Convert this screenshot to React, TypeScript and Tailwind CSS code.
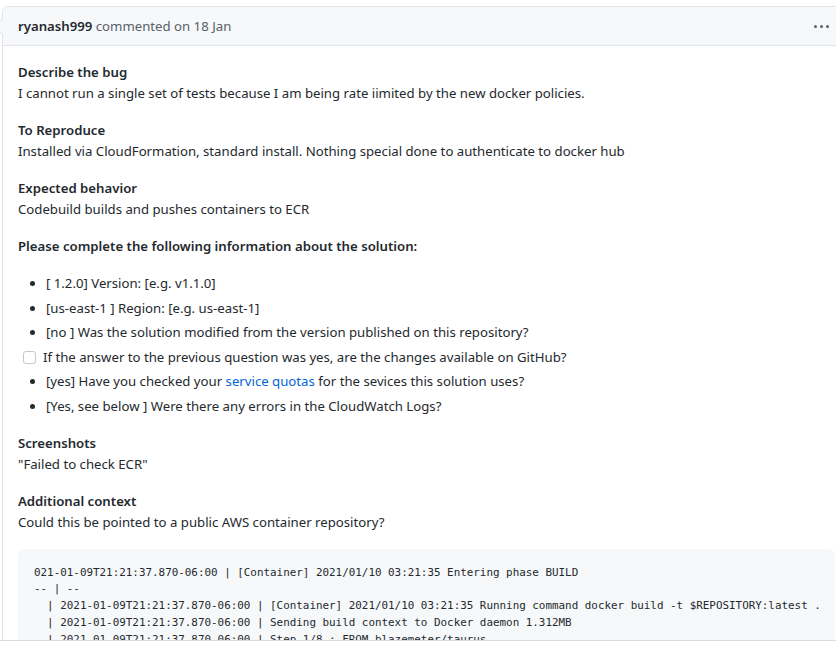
import React from "react";

const codeLines = [
  "021-01-09T21:21:37.870-06:00 | [Container] 2021/01/10 03:21:35 Entering phase BUILD",
  "-- | --",
  "  | 2021-01-09T21:21:37.870-06:00 | [Container] 2021/01/10 03:21:35 Running command docker build -t $REPOSITORY:latest .",
  "  | 2021-01-09T21:21:37.870-06:00 | Sending build context to Docker daemon 1.312MB",
  "  | 2021-01-09T21:21:37.870-06:00 | Step 1/8 : FROM blazemeter/taurus",
];

function Section({ title, children }: { title: string; children: React.ReactNode }) {
  return (
    <p className="mb-4">
      <span className="font-semibold">{title}</span>
      <br />
      {children}
    </p>
  );
}

export default function App() {
  return (
    <div
      className="relative h-[645px] w-[836px] overflow-hidden bg-white text-[13.2px] leading-[21px] text-[#24292e]"
      style={{ fontFamily: '"Noto Sans", "Open Sans", Arial, sans-serif' }}
    >
      <div className="pl-[2px] pt-[6px]">
        <div className="relative w-[860px] rounded-tl-md border border-[#e1e4e8]">
          <svg
            className="absolute left-[-9px] top-[11px]"
            width="10"
            height="18"
            viewBox="0 0 10 18"
          >
            <polygon points="10,0 2,8 2,9 10,17" fill="#f6f8fa" />
            <polyline points="8.5,0.5 1,8.5 8.5,16.5" fill="none" stroke="#d7dbe0" strokeWidth="1" />
          </svg>
          <div className="flex h-[39px] items-center justify-between rounded-tl-md border-b border-[#e1e4e8] bg-[#f6f8fa] pl-[15px] pr-[32px]">
            <div>
              <span className="font-semibold text-[#24292e]">ryanash999</span>
              <span className="text-[#586069]"> commented on 18 Jan</span>
            </div>
            <div className="flex items-center gap-[3px]">
              <span className="h-[3px] w-[3px] rounded-full bg-[#586069]" />
              <span className="h-[3px] w-[3px] rounded-full bg-[#586069]" />
              <span className="h-[3px] w-[3px] rounded-full bg-[#586069]" />
            </div>
          </div>
          <div className="pl-[15px] pr-[26px] pt-[16px]">
            <Section title="Describe the bug">
              I cannot run a single set of tests because I am being rate iimited by the new docker policies.
            </Section>
            <Section title="To Reproduce">
              Installed via CloudFormation, standard install. Nothing special done to authenticate to docker hub
            </Section>
            <Section title="Expected behavior">Codebuild builds and pushes containers to ECR</Section>
            <p className="mb-4 font-semibold">Please complete the following information about the solution:</p>
            <ul className="mb-4 list-disc pl-[28px]">
              <li>[ 1.2.0] Version: [e.g. v1.1.0]</li>
              <li className="mt-[3.5px]">[us-east-1 ] Region: [e.g. us-east-1]</li>
              <li className="mt-[3.5px]">[no ] Was the solution modified from the version published on this repository?</li>
              <li className="mt-[3.5px] ml-[-23px] flex list-none items-center">
                <span className="mr-[7px] inline-block h-[13px] w-[13px] rounded-[3px] border border-[#c8c8c8] bg-white" />
                If the answer to the previous question was yes, are the changes available on GitHub?
              </li>
              <li className="mt-[3.5px]">
                [yes] Have you checked your <span className="text-[#0366d6]">service quotas</span> for the sevices this solution uses?
              </li>
              <li className="mt-[3.5px]">[Yes, see below ] Were there any errors in the CloudWatch Logs?</li>
            </ul>
            <Section title="Screenshots">"Failed to check ECR"</Section>
            <Section title="Additional context">Could this be pointed to a public AWS container repository?</Section>
            <div className="rounded-md bg-[#f6f8fa] p-4">
              <pre
                className="text-[10.9px] leading-[16.75px] text-[#24292e]"
                style={{ fontFamily: '"DejaVu Sans Mono", "Liberation Mono", monospace' }}
              >
                {codeLines.join("\n")}
              </pre>
            </div>
          </div>
        </div>
      </div>
      <div className="absolute left-0 right-0 top-[640px] h-[5px] border-t border-[#dadce0] bg-white" />
    </div>
  );
}
